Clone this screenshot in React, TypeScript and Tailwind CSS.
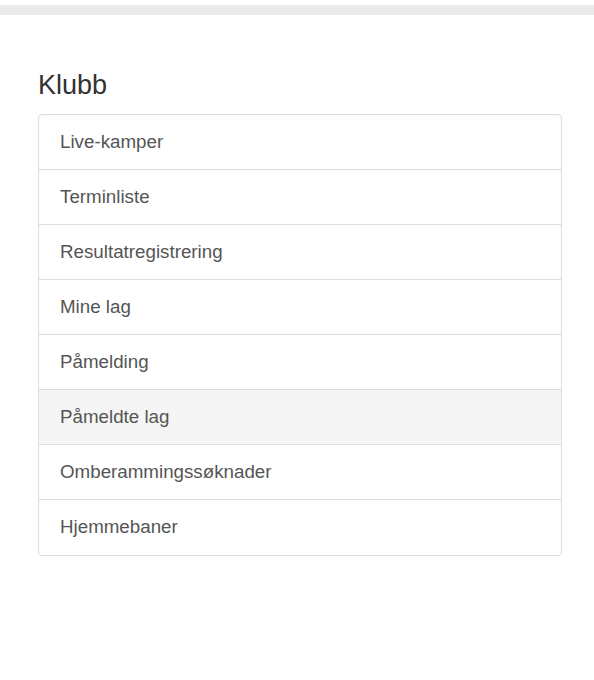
import type React from "react"

const items = [
  "Live-kamper",
  "Terminliste",
  "Resultatregistrering",
  "Mine lag",
  "Påmelding",
  "Påmeldte lag",
  "Omberammingssøknader",
  "Hjemmebaner",
]

const App: React.FC = () => {
  const active = 5

  return (
    <div className="min-h-[680px] bg-white font-['Liberation_Sans',Arial,sans-serif]">
      <div className="pt-[5px]">
        <div className="h-[10px] bg-[#ebebeb]" />
      </div>

      <div className="px-[38px] pt-[56px]">
        <h3 className="mb-[15px] text-[27px] leading-[28px] text-[#333]">Klubb</h3>

        <div className="w-[524px] rounded-[4px] border border-[#ddd]">
          {items.map((item, index) => (
            <div
              key={item}
              className={`px-[21px] flex items-center text-[18.75px] text-[#555] ${
                index === 0 ? "h-[54px]" : index === items.length - 1 ? "h-[56px] border-t border-[#ddd]" : "h-[55px] border-t border-[#ddd]"
              } ${index === active ? "bg-[#f5f5f5]" : ""}`}
            >
              {item}
            </div>
          ))}
        </div>
      </div>
    </div>
  )
}

export default App
